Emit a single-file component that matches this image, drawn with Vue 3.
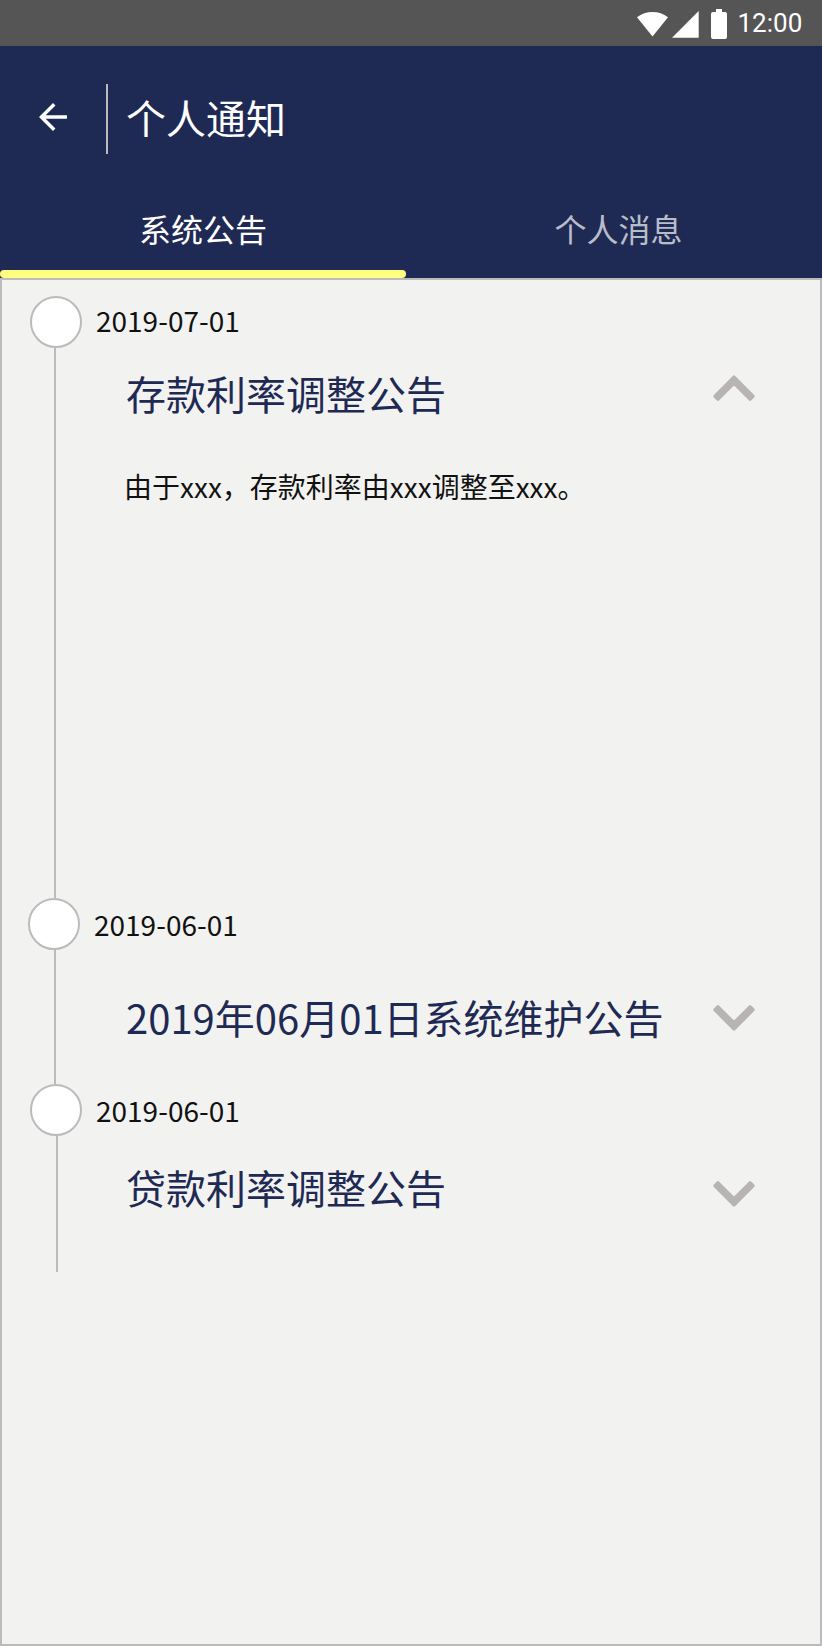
<script setup>
import { ref } from 'vue'

const tabs = ['系统公告', '个人消息']
const activeTab = ref(0)

const notices = ref([
  { key: 'first', date: '2019-07-01', title: '存款利率调整公告', body: '由于xxx，存款利率由xxx调整至xxx。', open: true },
  { key: 'second', date: '2019-06-01', title: '2019年06月01日系统维护公告', body: '', open: false },
  { key: 'third', date: '2019-06-01', title: '贷款利率调整公告', body: '', open: false },
])
</script>

<template>
  <div class="screen">
    <div class="status">
      <svg class="wifi" viewBox="0 0 31 25"><path d="M15.5 24.5 0 5.2C4.500 1.700 9.700 0 15.500 0S26.500 1.700 31 5.200Z" /></svg>
      <svg class="signal" viewBox="0 0 27 27"><path d="M0 26.700 26.700 0V26.700Z" /></svg>
      <svg class="battery" viewBox="0 0 16 30"><path d="M5 0h6v3h3q2 0 2 2v23q0 2-2 2H2q-2 0-2-2V5q0-2 2-2h3Z" /></svg>
      <span class="clock">12:00</span>
    </div>

    <header class="header">
      <div class="bar">
        <svg class="back" viewBox="0 0 24 24"><path d="M20 11H7.830l5.590-5.590L12 4l-8 8 8 8 1.410-1.410L7.830 13H20z" /></svg>
        <span class="divider"></span>
        <h1 class="heading">个人通知</h1>
      </div>
      <nav class="tabs">
        <div
          v-for="(tab, i) in tabs"
          :key="tab"
          class="tab"
          :class="{ active: i === activeTab }"
          @click="activeTab = i"
        ><span>{{ tab }}</span></div>
      </nav>
    </header>

    <main class="panel">
      <article v-for="n in notices" :key="n.key" class="notice" :class="n.key">
        <div class="rail">
          <span class="dot"></span>
          <span class="line"></span>
        </div>
        <div class="content">
          <time class="date">{{ n.date }}</time>
          <div class="row">
            <h2 class="title">{{ n.title }}</h2>
            <svg class="chevron" :class="{ open: n.open }" viewBox="0 0 42 26" @click="n.open = !n.open">
              <path d="M2.100 4.850 4.950 2 21 18.050 37.050 2 39.900 4.850 21 23.750Z" />
            </svg>
          </div>
          <p v-if="n.open && n.body" class="body">{{ n.body }}</p>
        </div>
      </article>
    </main>
  </div>
</template>

<style>
body {
  margin: 0;
}
</style>

<style scoped>
.screen {
  display: flex;
  flex-direction: column;
  width: 822px;
  height: 1646px;
  overflow: hidden;
  font-family: "Noto Sans CJK SC", sans-serif;
  color: #111;
}

.screen * {
  box-sizing: border-box;
}

svg {
  display: block;
  flex: none;
}

.status {
  display: flex;
  align-items: flex-start;
  flex: none;
  height: 46px;
  padding-left: 637px;
  background: #555;
  color: #fff;
  fill: #fff;
}

.wifi {
  width: 31px;
  height: 25px;
  margin-top: 12px;
}

.signal {
  width: 27px;
  height: 27px;
  margin: 11px 0 0 4px;
}

.battery {
  width: 16px;
  height: 30px;
  margin: 9px 0 0 12px;
}

.clock {
  margin: 8px 0 0 10.500px;
  font: 26px/30px Roboto, sans-serif;
}

.header {
  display: flex;
  flex-direction: column;
  flex: none;
  height: 232px;
  background: #1f2a54;
}

.bar {
  display: flex;
  align-items: flex-start;
  height: 132px;
  padding-left: 32px;
}

.back {
  width: 42px;
  height: 42px;
  margin-top: 50px;
  fill: #fff;
}

.divider {
  width: 2px;
  height: 70px;
  margin: 38px 18px 0 32px;
  background: #bbb;
}

.heading {
  margin: 41px 0 0;
  font-size: 40px;
  font-weight: 400;
  line-height: 60px;
  color: #fff;
}

.tabs {
  display: grid;
  grid-template-columns: 406px 408px;
  gap: 8px;
  height: 100px;
}

.tab {
  display: flex;
  flex-direction: column;
  align-items: center;
  justify-content: space-between;
  padding: 27px 0 0 1px;
  font-size: 32px;
  line-height: 46px;
  color: rgba(255, 255, 255, 0.7);
}

.tab.active {
  padding-left: 0;
  color: #fff;
}

.tab.active::after {
  content: "";
  width: 100%;
  height: 8px;
  border-radius: 4px;
  background: #ffff80;
}

.panel {
  flex: 1;
  padding: 16px 0 0 26px;
  border: 2px solid #bbb;
  background: #f2f2f0;
}

.notice {
  display: flex;
}

.first {
  height: 602px;
}

.second {
  height: 186px;
}

.third {
  height: 188px;
}

.rail {
  display: flex;
  flex-direction: column;
  flex: none;
  width: 54px;
}

.dot {
  width: 52px;
  height: 52px;
  margin-left: 2px;
  border: 2px solid #bbb;
  border-radius: 50%;
  background: #fff;
}

.second .dot {
  margin-left: 0;
}

.line {
  flex: 1;
  width: 2px;
  margin-left: 26px;
  background: #bbb;
}

.third .line {
  margin-left: 28px;
}

.content {
  display: flex;
  flex-direction: column;
  flex: 1;
  padding-left: 14px;
}

.date {
  margin-top: 4px;
  font-size: 28px;
  line-height: 40px;
}

.second .date {
  margin: 6px 0 0 -2px;
}

.third .date {
  margin-top: 6px;
}

.row {
  display: flex;
  align-items: flex-start;
  justify-content: space-between;
  padding: 0 65px 0 30px;
}

.first .row {
  margin-top: 23px;
}

.second .row {
  margin-top: 43px;
}

.third .row {
  margin-top: 27px;
}

.title {
  margin: 0;
  font-size: 40px;
  font-weight: 400;
  line-height: 60px;
  color: #1f2a54;
}

.chevron {
  width: 42px;
  height: 26px;
  margin-top: 18px;
  overflow: visible;
  fill: #b8b4b3;
  stroke: #b8b4b3;
  stroke-width: 3.600;
  stroke-linejoin: round;
}

.chevron.open {
  margin-top: 12px;
  transform: rotate(180deg);
}

.third .chevron {
  margin-top: 24px;
}

.body {
  margin: 43px 0 0 28px;
  font-size: 28px;
  line-height: 40px;
}
</style>
